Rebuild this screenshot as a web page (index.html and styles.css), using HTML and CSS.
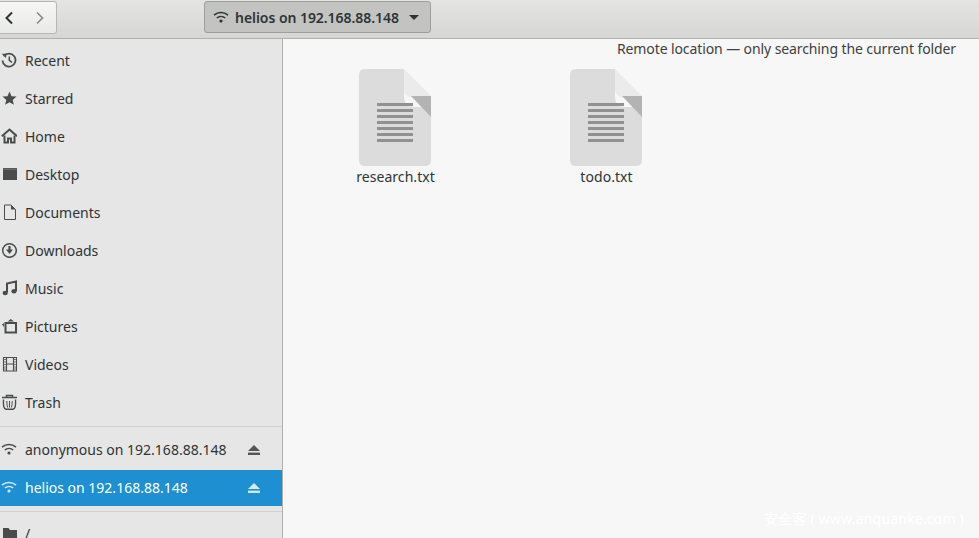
FILE: index.html
```html
<!DOCTYPE html>
<html lang="en">
<head>
<meta charset="utf-8">
<title>Files</title>
<link rel="stylesheet" href="styles.css">
</head>
<body>
<svg class="defs" width="0" height="0" aria-hidden="true">
  <symbol id="wifi" viewBox="0 0 16 16">
    <path d="M1 6.200C5 2.600 11 2.600 15 6.200" fill="none" stroke="currentColor" stroke-width="1.600"/>
    <path d="M3.800 9C6.200 6.900 9.800 6.900 12.200 9" fill="none" stroke="currentColor" stroke-width="1.600"/>
    <circle cx="8" cy="12" r="1.600" fill="currentColor"/>
  </symbol>
  <symbol id="eject" viewBox="0 0 14 12">
    <path d="M7 1 13 7H1Z" fill="currentColor"/>
    <rect x="1" y="8.600" width="12" height="2.400" fill="currentColor"/>
  </symbol>
  <symbol id="doc" viewBox="0 0 72 97">
    <path d="M6 0H45V28Q45 38 55 38H72V91Q72 97 66 97H6Q0 97 0 91V6Q0 0 6 0Z" fill="#dcdcdc"/>
    <path d="M45 0 72 27V28H53Q45 28 45 20Z" fill="#ebebeb"/>
    <path d="M52 27H72V48Z" fill="#b3b3b3"/>
    <path d="M18 34H54V37H18ZM18 40H54V43H18ZM18 46H54V49H18ZM18 52H54V55H18ZM18 58H54V61H18ZM18 64H54V67H18ZM18 70H54V73H18Z" fill="#919191"/>
  </symbol>
</svg>

<header class="topbar">
  <div class="nav-group">
    <span class="nav-btn back">
      <svg width="10" height="14" viewBox="0 0 10 14"><path d="M8 1.500 2.500 7 8 12.500" fill="none" stroke="#2e3436" stroke-width="2"/></svg>
    </span>
    <span class="nav-btn forward">
      <svg width="10" height="14" viewBox="0 0 10 14"><path d="M2 1.500 7.500 7 2 12.500" fill="none" stroke="#8a8c8c" stroke-width="1.700"/></svg>
    </span>
  </div>
  <div class="path-btn">
    <svg class="ico-16" width="16" height="16"><use href="#wifi"/></svg>
    <span class="path-label">helios on 192.168.88.148</span>
    <svg class="caret" width="10" height="5" viewBox="0 0 10 5"><path d="M0 0H10L5 5Z" fill="#2e3436"/></svg>
  </div>
</header>

<div class="body">
  <nav class="sidebar">
    <ul class="places">
      <li class="row">
        <svg class="icon" viewBox="0 0 16 16"><path d="M2.800 4.200A6.500 6.500 0 1 1 1.500 8.500" fill="none" stroke="currentColor" stroke-width="1.800"/><path d="M.7 1.800 5.500 1.700 5 6Z" fill="currentColor"/><path d="M8.300 4.500V8.400L11 10.300" fill="none" stroke="currentColor" stroke-width="1.500"/></svg>
        <span>Recent</span>
      </li>
      <li class="row">
        <svg class="icon" viewBox="0 0 16 16"><path d="M8.500 1.500 10.500 6.200 15.500 6.600 11.700 9.900 12.900 14.800 8.500 12.200 4.100 14.800 5.300 9.900 1.500 6.600 6.500 6.200Z" fill="currentColor"/></svg>
        <span>Starred</span>
      </li>
      <li class="row">
        <svg class="icon" viewBox="0 0 16 16"><path d="M.8 8.200 8.500 1.500 16 8.200" fill="none" stroke="currentColor" stroke-width="2"/><path d="M3.500 7.500V14.500H7V10.500H10V14.500H13.500V7.500" fill="none" stroke="currentColor" stroke-width="2"/></svg>
        <span>Home</span>
      </li>
      <li class="row">
        <svg class="icon" viewBox="0 0 16 16"><path d="M2 2H16V14H2Z" fill="currentColor"/><path d="M2 3.200H16" stroke="#8a8a8a" stroke-width=".7"/></svg>
        <span>Desktop</span>
      </li>
      <li class="row">
        <svg class="icon" viewBox="0 0 16 16"><path d="M3.500 1H10L14.500 5.500V15.500H3.500Z" fill="none" stroke="currentColor" stroke-width="1"/><path d="M10 1V5.500H14.500Z" fill="currentColor"/></svg>
        <span>Documents</span>
      </li>
      <li class="row">
        <svg class="icon" viewBox="0 0 16 16"><circle cx="8.500" cy="8.500" r="6.800" fill="none" stroke="currentColor" stroke-width="1.500"/><path d="M7.400 4H9.600V7.500H12L8.500 12 5 7.500H7.400Z" fill="currentColor"/></svg>
        <span>Downloads</span>
      </li>
      <li class="row">
        <svg class="icon" viewBox="0 0 16 16"><path d="M6 12.500V3.500L15 1.500V11" fill="none" stroke="currentColor" stroke-width="2"/><ellipse cx="4.200" cy="13" rx="2.600" ry="2.200" fill="currentColor"/><ellipse cx="13" cy="11.300" rx="2.600" ry="2.200" fill="currentColor"/></svg>
        <span>Music</span>
      </li>
      <li class="row">
        <svg class="icon" viewBox="0 0 16 16"><rect x="4.500" y="5" width="10.500" height="9.500" fill="none" stroke="currentColor" stroke-width="2"/><path d="M6.500 3.500 9.800 1 13 3.500Z" fill="currentColor"/><path d="M1 6.500 3 5V9Z" fill="currentColor"/></svg>
        <span>Pictures</span>
      </li>
      <li class="row">
        <svg class="icon" viewBox="0 0 16 16"><path d="M2.500 1.500H15.500V15H2.500ZM5.500 1.500V15M12.500 1.500V15M5.500 8H12.500" fill="none" stroke="currentColor" stroke-width="1.100"/><path d="M2.500 3.500H5.500M2.500 6H5.500M2.500 8.500H5.500M2.500 11H5.500M2.500 13H5.500M12.500 3.500H15.500M12.500 6H15.500M12.500 8.500H15.500M12.500 11H15.500M12.500 13H15.500" stroke="currentColor" stroke-width=".7"/></svg>
        <span>Videos</span>
      </li>
      <li class="row">
        <svg class="icon" viewBox="0 0 16 16"><path d="M1 3.500H16M5.500 3V1.500H11.500V3" fill="none" stroke="currentColor" stroke-width="1.500"/><path d="M2.500 5.500Q1.800 14.800 5 15.300H12Q15.200 14.800 14.500 5.500" fill="none" stroke="currentColor" stroke-width="1.400"/><path d="M5.800 7Q5.800 11 6.600 13.500M8.500 7V13.500M11.200 7Q11.200 11 10.400 13.500" fill="none" stroke="currentColor" stroke-width="1"/></svg>
        <span>Trash</span>
      </li>
    </ul>
    <hr class="sep sep-first">
    <ul class="places">
      <li class="row mount">
        <svg class="icon wifi" width="16" height="16"><use href="#wifi"/></svg>
        <span class="grow">anonymous on 192.168.88.148</span>
        <svg class="eject" width="14" height="12"><use href="#eject"/></svg>
      </li>
      <li class="row mount selected">
        <svg class="icon wifi" width="16" height="16"><use href="#wifi"/></svg>
        <span class="grow">helios on 192.168.88.148</span>
        <svg class="eject" width="14" height="12"><use href="#eject"/></svg>
      </li>
    </ul>
    <hr class="sep sep-second">
    <ul class="places last">
      <li class="row">
        <svg class="icon" viewBox="0 0 16 16"><path d="M2 3H7.500L9 5H16V14H2Z" fill="currentColor"/></svg>
        <span>/</span>
      </li>
    </ul>
  </nav>

  <main class="content">
    <p class="notice">Remote location — only searching the current folder</p>
    <div class="files">
      <figure class="file">
        <svg width="72" height="97"><use href="#doc"/></svg>
        <figcaption>research.txt</figcaption>
      </figure>
      <figure class="file">
        <svg width="72" height="97"><use href="#doc"/></svg>
        <figcaption>todo.txt</figcaption>
      </figure>
    </div>
    <div class="watermark">安全客 ( www.anquanke.com )</div>
  </main>
</div>
</body>
</html>
```

FILE: styles.css
```css
* { box-sizing: border-box; }

html, body {
  margin: 0;
  height: 100%;
  overflow: hidden;
}

body {
  display: flex;
  flex-direction: column;
  font-family: "Noto Sans", "Noto Sans CJK SC", sans-serif;
  font-size: 14px;
  color: #2e3436;
  background: #f7f7f7;
}

.defs { position: absolute; }

.topbar {
  flex: none;
  height: 39px;
  display: flex;
  align-items: flex-start;
  padding-top: 1px;
  background: linear-gradient(#e4e4e3, #d6d6d5);
  border-bottom: 1px solid #b0b0ae;
}

.nav-group {
  flex: none;
  display: flex;
  width: 67px;
  height: 33px;
  margin-left: -10px;
  background: linear-gradient(#f6f6f5, #e9e9e8);
  border: 1px solid #b6b6b4;
  border-radius: 3px;
}

.nav-btn {
  display: flex;
  align-items: center;
  justify-content: center;
}

.back { padding-left: 6px; width: 29px; }
.forward { padding-left: 4px; width: 36px; }

.path-btn {
  flex: none;
  display: flex;
  align-items: center;
  width: 227px;
  height: 32px;
  margin-left: 147px;
  padding-left: 8px;
  background: #c3c3c2;
  border: 1px solid #9e9e9c;
  border-radius: 3px;
  font-weight: 600;
  color: #2e3436;
}

.path-label { margin-left: 6px; letter-spacing: -.05px; white-space: nowrap; }
.caret { margin-left: 10px; }

.body {
  flex: 1;
  min-height: 0;
  display: flex;
}

.sidebar {
  flex: none;
  width: 283px;
  padding-top: 2px;
  background: #e6e6e6;
  border-right: 1px solid #b0b0ae;
}

.places {
  list-style: none;
  margin: 0;
  padding: 0;
}

.places.last { margin-top: 2px; }

.row {
  display: flex;
  align-items: center;
  height: 38px;
  padding-left: 1px;
  white-space: nowrap;
}

.icon {
  flex: none;
  width: 16px;
  height: 16px;
  margin-right: 8px;
  color: #4a4c4c;
}

.mount { height: 39px; padding: 0 21px 3px 1px; }
.grow { flex: 1; }
.eject { flex: none; margin-top: 2px; color: #555; }

.selected {
  height: 36px;
  padding-bottom: 2px;
  background: #1e8fd0;
  color: #fff;
}

.selected .icon, .selected .eject { color: #d4e9f6; }

.sep {
  height: 1px;
  margin: 0;
  border: 0;
  background: #d0d0d0;
}

.sep-first { margin: 5px 0 4px; }
.sep-second { margin: 5px 0 0; }

.content {
  flex: 1;
  position: relative;
  background: #f7f7f7;
}

.notice {
  margin: 0;
  padding: 0 23px 0 0;
  height: 30px;
  line-height: 19px;
  text-align: right;
  letter-spacing: -.1px;
  color: #3d3f40;
}

.files {
  display: flex;
  padding-left: 6px;
}

.file {
  width: 211px;
  margin: 0;
  display: flex;
  flex-direction: column;
  align-items: center;
}

.file figcaption {
  margin-top: 1px;
  padding-left: 2px;
  line-height: 20px;
  letter-spacing: .05px;
}

.watermark {
  position: absolute;
  right: 15px;
  bottom: 10px;
  font-size: 14px;
  letter-spacing: .2px;
  color: #ffffff;
  white-space: nowrap;
}
```
